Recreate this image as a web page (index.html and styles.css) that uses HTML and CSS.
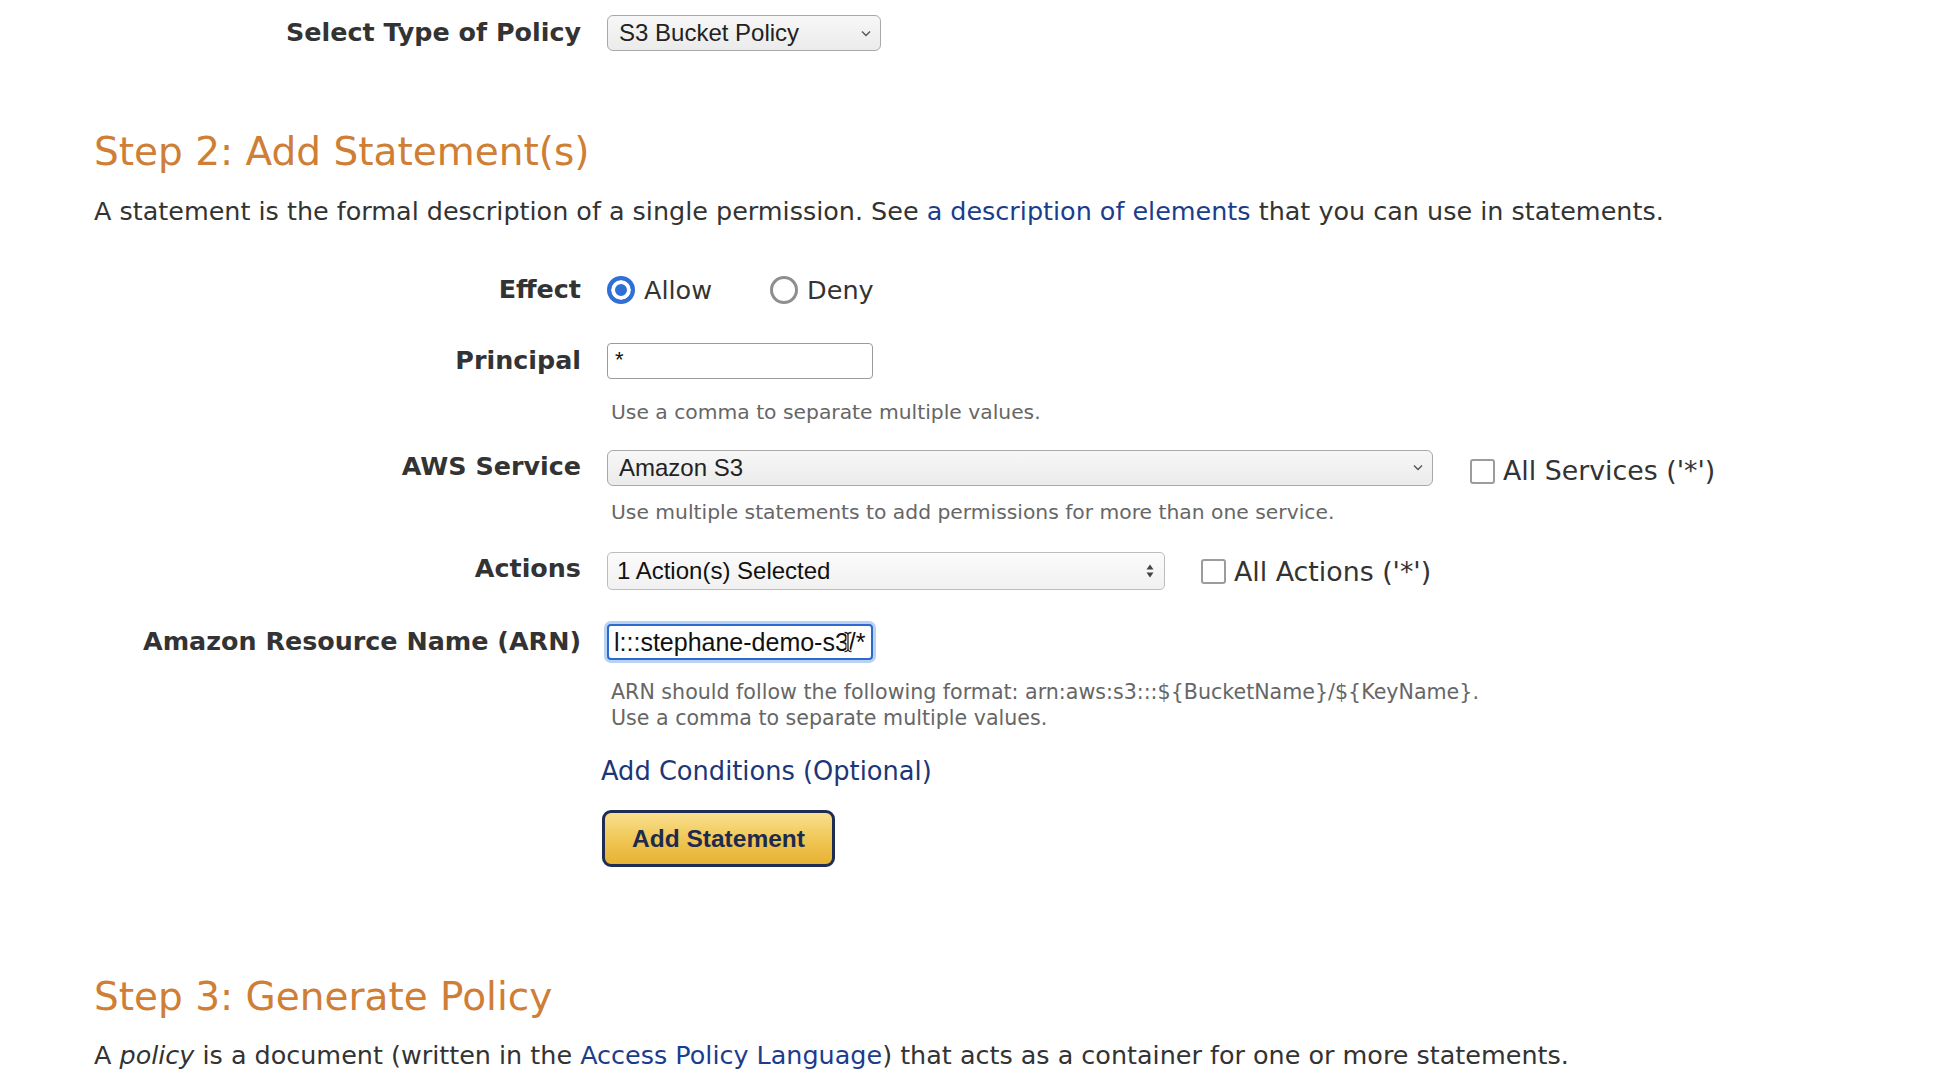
FILE: index.html
```html
<!DOCTYPE html>
<html lang="en">
<head>
<meta charset="utf-8">
<title>AWS Policy Generator</title>
<link rel="stylesheet" href="styles.css">
</head>
<body>
<main class="page">
  <div class="row row-type">
    <span class="lbl">Select Type of Policy</span>
    <div class="select select-type">
      <span class="sel-text">S3 Bucket Policy</span>
      <svg class="chev" width="10" height="7" viewBox="0 0 10 7"><path d="M1 1.5 L5 5.5 L9 1.5" fill="none" stroke="#555" stroke-width="1.4"/></svg>
    </div>
  </div>

  <h2 class="step step2">Step 2: Add Statement(s)</h2>
  <p class="desc desc2">A statement is the formal description of a single permission. See <a class="link" href="#">a description of elements</a> that you can use in statements.</p>

  <div class="row row-effect">
    <span class="lbl">Effect</span>
    <div class="radios">
      <span class="radio-item"><span class="radio on"></span><span class="opt">Allow</span></span>
      <span class="radio-item deny"><span class="radio off"></span><span class="opt">Deny</span></span>
    </div>
  </div>

  <div class="row row-principal">
    <span class="lbl">Principal</span>
    <div class="input"><span class="in-text star">*</span></div>
  </div>
  <p class="help help1">Use a comma to separate multiple values.</p>

  <div class="row row-service">
    <span class="lbl">AWS Service</span>
    <div class="select select-service">
      <span class="sel-text">Amazon S3</span>
      <svg class="chev" width="10" height="7" viewBox="0 0 10 7"><path d="M1 1.5 L5 5.5 L9 1.5" fill="none" stroke="#555" stroke-width="1.4"/></svg>
    </div>
    <span class="check-item check-services"><span class="checkbox"></span><span class="opt opt-check">All Services ('*')</span></span>
  </div>
  <p class="help help2">Use multiple statements to add permissions for more than one service.</p>

  <div class="row row-actions">
    <span class="lbl lbl-actions">Actions</span>
    <div class="select select-actions">
      <span class="sel-text">1 Action(s) Selected</span>
      <svg class="updown" width="8" height="14" viewBox="0 0 8 14"><path d="M4 0.5 L7.5 5.5 L0.5 5.5 Z M4 13.5 L7.5 8.5 L0.5 8.5 Z" fill="#444"/></svg>
    </div>
    <span class="check-item check-actions"><span class="checkbox"></span><span class="opt opt-check">All Actions ('*')</span></span>
  </div>

  <div class="row row-arn">
    <span class="lbl">Amazon Resource Name (ARN)</span>
    <div class="input focused">
      <span class="in-text">l:::stephane-demo-s3/*</span>
      <svg class="ibeam" width="10" height="22" viewBox="0 0 10 22"><path d="M1.5 1.5 Q5 1.5 5 4 L5 18 Q5 20.5 1.5 20.5 M8.5 1.5 Q5 1.5 5 4 M5 18 Q5 20.5 8.5 20.5" fill="none" stroke="#fff" stroke-width="3"/><path d="M1.5 1.5 Q5 1.5 5 4 L5 18 Q5 20.5 1.5 20.5 M8.5 1.5 Q5 1.5 5 4 M5 18 Q5 20.5 8.5 20.5" fill="none" stroke="#222" stroke-width="1.3"/></svg>
    </div>
  </div>
  <p class="help help3">ARN should follow the following format: arn:aws:s3:::${BucketName}/${KeyName}.<br>Use a comma to separate multiple values.</p>

  <a class="link cond" href="#">Add Conditions (Optional)</a>
  <div class="btn-wrap"><button class="btn" type="button">Add Statement</button></div>

  <h2 class="step step3">Step 3: Generate Policy</h2>
  <p class="desc desc3">A <em>policy</em> is a document (written in the <a class="link" href="#">Access Policy Language</a>) that acts as a container for one or more statements.</p>
</main>
</body>
</html>
```

FILE: styles.css
```css
html, body {
  margin: 0;
  padding: 0;
  background: #ffffff;
}

body {
  color: #333333;
  font-family: "DejaVu Sans", Verdana, sans-serif;
  font-size: 25px;
  overflow: hidden;
}

.page {
  padding: 15px 0 0 94px;
}

.row {
  display: flex;
  align-items: center;
  gap: 26px;
}

.lbl {
  flex: none;
  width: 487px;
  text-align: right;
  font-weight: bold;
  font-size: 25.4px;
  line-height: 30px;
  color: #333333;
  margin-top: -3px;
}

.lbl-actions {
  margin-top: -7px;
}

/* selects */
.select {
  position: relative;
  box-sizing: border-box;
  height: 36px;
  display: flex;
  align-items: center;
  border: 1px solid #a9a9a9;
  border-radius: 6px;
  background: linear-gradient(#f7f7f7, #ebebeb);
  font-family: "Liberation Sans", Arial, sans-serif;
  font-size: 24px;
  color: #222222;
  padding-left: 11px;
}

.sel-text {
  flex: 1;
  white-space: nowrap;
}

.chev {
  flex: none;
  margin-right: 9px;
}

.select-type {
  width: 274px;
}

.select-service {
  width: 826px;
}

.select-actions {
  width: 558px;
  height: 38px;
  padding-left: 9px;
  border-color: #bdbdbd;
  border-radius: 5px;
  background: linear-gradient(#fbfbfb, #f1f1f1);
  color: #111111;
}

.updown {
  flex: none;
  margin-right: 10px;
}

/* headings & text */
.step {
  margin: 0;
  font-size: 39px;
  line-height: 48px;
  font-weight: normal;
  color: #cf7e35;
}

.step2 {
  margin-top: 77px;
}

.step3 {
  margin-top: 106px;
}

.desc {
  margin: 0;
  font-size: 25.45px;
  line-height: 30px;
  color: #333333;
  white-space: nowrap;
}

.desc2 {
  margin-top: 20px;
}

.desc3 {
  margin-top: 19px;
}

.link {
  color: #1c3c8c;
  text-decoration: none;
}

/* radios */
.row-effect {
  margin-top: 46px;
  height: 36px;
}

.radios {
  display: flex;
  align-items: center;
}

.radio-item {
  display: flex;
  align-items: center;
  gap: 9px;
}

.radio-item.deny {
  margin-left: 58px;
}

.radio {
  box-sizing: border-box;
  width: 28px;
  height: 28px;
  border-radius: 50%;
  flex: none;
}

.radio.on {
  border: 4px solid #2f6fd6;
  background: #2f6fd6;
  box-shadow: inset 0 0 0 4px #ffffff;
}

.radio.off {
  border: 3px solid #8e8e8e;
  background: #ffffff;
}

.opt {
  font-size: 25.5px;
  line-height: 30px;
  color: #333333;
  white-space: nowrap;
}

.opt-check {
  font-size: 26.8px;
}

/* inputs */
.input {
  position: relative;
  box-sizing: border-box;
  width: 266px;
  height: 36px;
  border: 1px solid #9b9b9b;
  border-radius: 4px;
  background: #ffffff;
  font-family: "Liberation Sans", Arial, sans-serif;
  font-size: 24px;
  color: #111111;
  padding-left: 7px;
  display: flex;
  align-items: center;
  overflow: hidden;
}

.in-text {
  white-space: nowrap;
}

.in-text.star {
  align-self: flex-start;
  margin-top: 3px;
  font-size: 22px;
}

.input.focused {
  border: 2px solid #2d69cf;
  box-shadow: 0 0 0 3px #b7d3f4;
  overflow: visible;
  padding-left: 5px;
  height: 36px;
  font-size: 25px;
}

.ibeam {
  position: absolute;
  left: 234px;
  top: 5px;
}

.row-principal {
  margin-top: 35px;
}

.help {
  margin: 0 0 0 517px;
  font-size: 20.3px;
  line-height: 24px;
  color: #666666;
  white-space: nowrap;
}

.help1 {
  margin-top: 21px;
}

.row-service {
  margin-top: 25px;
}

.check-item {
  display: flex;
  align-items: center;
  gap: 8px;
}

.check-services {
  margin-left: 11px;
  margin-top: 7px;
}

.check-actions {
  margin-left: 10px;
  margin-top: 1px;
}

.checkbox {
  box-sizing: border-box;
  flex: none;
  width: 25px;
  height: 25px;
  border: 2px solid #9c9c9c;
  border-radius: 3px;
  background: #ffffff;
}

.help2 {
  margin-top: 14px;
}

.row-actions {
  margin-top: 28px;
}

.row-arn {
  margin-top: 34px;
}

.help3 {
  margin-top: 19px;
  line-height: 26px;
  font-size: 20.6px;
}

.cond {
  display: block;
  width: max-content;
  margin: 25px 0 0 507px;
  font-size: 25.7px;
  line-height: 30px;
  color: #1d3677;
}

.btn-wrap {
  margin: 24px 0 0 508px;
}

.btn {
  display: block;
  box-sizing: border-box;
  width: 233px;
  height: 57px;
  border: 3px solid #1f2d55;
  border-radius: 9px;
  background: linear-gradient(#f9e08e, #f0c552 55%, #e6b233);
  font-family: "Liberation Sans", Arial, sans-serif;
  font-weight: bold;
  font-size: 24.5px;
  color: #1d2a4d;
  padding: 0;
}
```
